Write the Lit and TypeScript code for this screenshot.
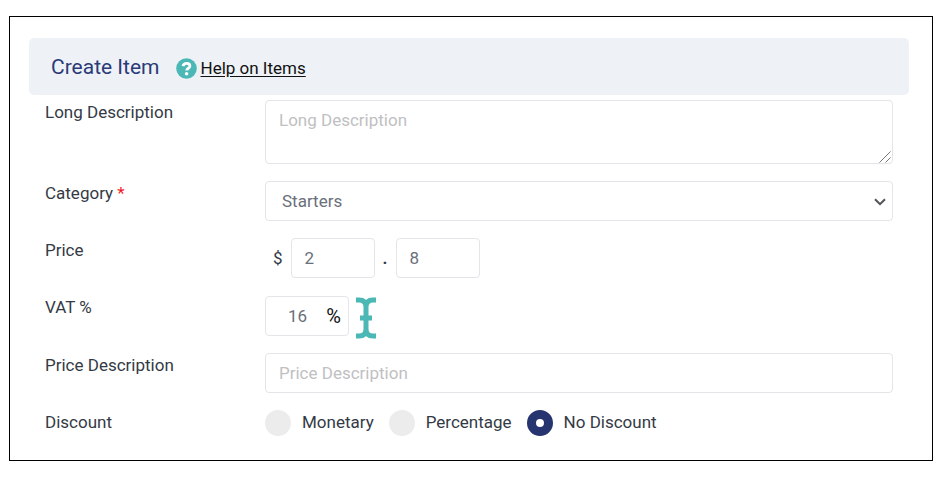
import { LitElement, html, css } from "lit";
import { customElement, state } from "lit/decorators.js";

type Discount = "monetary" | "percentage" | "none";

const DISCOUNTS: { value: Discount; label: string }[] = [
  { value: "monetary", label: "Monetary" },
  { value: "percentage", label: "Percentage" },
  { value: "none", label: "No Discount" },
];

@customElement("app-root")
export class AppRoot extends LitElement {
  @state() private discount: Discount = "none";

  static styles = css`
    :host {
      display: block;
      font-family: Roboto, "Liberation Sans", sans-serif;
      font-size: 17px;
      line-height: 24px;
      color: #343a45;
    }
    * {
      box-sizing: border-box;
    }
    .frame {
      margin: 16px 10px 16px 9px;
      padding: 21px 23px 24px 19px;
      border: 1px solid #000;
      background: #fff;
    }
    .head {
      display: flex;
      align-items: center;
      gap: 16px;
      padding: 17px 22px 15px;
      border-radius: 5px;
      background: #eef2f6;
    }
    .title {
      margin: 0;
      font-size: 21px;
      line-height: 25px;
      font-weight: 400;
      color: #2b3a78;
    }
    .help {
      display: flex;
      align-items: center;
      gap: 4px;
      padding-top: 2px;
      line-height: 21px;
      color: #111;
      text-underline-offset: 2px;
    }
    .help-icon {
      display: block;
      width: 21px;
      height: 21px;
    }
    .form {
      display: grid;
      gap: 17px;
      padding: 5px 16px 0;
    }
    .row {
      display: grid;
      grid-template-columns: 220px 1fr;
      align-items: start;
      margin: 0;
    }
    .required {
      color: #f01c24;
    }
    .control {
      display: block;
      width: 100%;
      height: 40px;
      margin: 0;
      padding: 7px 13px;
      border: 1px solid #e4e5e8;
      border-radius: 4px;
      background: #fff;
      font: inherit;
      color: #6a6f7a;
      outline: none;
    }
    .control::placeholder {
      color: #bfc0c2;
      opacity: 1;
    }
    .area-box,
    .select-box {
      position: relative;
    }
    .area {
      height: 64px;
      resize: none;
    }
    .grip {
      position: absolute;
      right: 2px;
      bottom: 1px;
      width: 12px;
      height: 12px;
      pointer-events: none;
    }
    .select {
      padding-left: 16px;
      appearance: none;
    }
    .chevron {
      position: absolute;
      right: 7px;
      top: 17px;
      width: 12px;
      height: 8px;
      pointer-events: none;
    }
    .inline {
      display: flex;
      align-items: center;
      gap: 8px;
    }
    .price {
      padding-left: 8px;
    }
    .point {
      font-weight: 700;
    }
    .amount {
      width: 84px;
    }
    .vat {
      display: flex;
      align-items: center;
      width: 84px;
      height: 40px;
      padding: 0 7px 0 22px;
      border: 1px solid #e4e5e8;
      border-radius: 4px;
    }
    .vat-input {
      flex: 1;
      min-width: 0;
      padding: 0;
      border: 0;
      background: none;
      font: inherit;
      color: #6a6f7a;
      outline: none;
    }
    .vat-sign {
      font-size: 20px;
      color: #111;
    }
    .vat-line {
      gap: 7px;
    }
    .cursor {
      width: 20px;
      height: 42px;
      margin: 2px 0 -3px;
    }
    .options {
      display: flex;
      flex-wrap: wrap;
      gap: 15px;
    }
    .option {
      display: flex;
      align-items: center;
      gap: 11px;
    }
    .radio {
      width: 26px;
      height: 26px;
      margin: 0;
      border-radius: 50%;
      background: #ececec;
      appearance: none;
    }
    .radio:checked {
      border: 9px solid #26356f;
      background: #fff;
    }
    .option-text {
      padding-bottom: 2px;
    }
  `;

  render() {
    return html`
      <main class="frame">
        <header class="head">
          <h1 class="title">Create Item</h1>
          <a class="help" href="#help">
            <svg class="help-icon" viewBox="0 0 21 21" aria-hidden="true">
              <circle cx="10.5" cy="10.5" r="10.3" fill="#4bb8b5" />
              <path
                d="M6.9 8.2C7.4 6.2 8.8 5.3 10.6 5.3c1.9 0 3.3 1 3.3 2.7 0 2.2-3.2 2.3-3.2 4.5"
                fill="none"
                stroke="#fff"
                stroke-width="2.8"
              />
              <circle cx="10.6" cy="15.8" r="1.8" fill="#fff" />
            </svg>
            Help on Items
          </a>
        </header>

        <form class="form">
          <div class="row">
            <label for="long">Long Description</label>
            <div class="area-box">
              <textarea class="control area" id="long" placeholder="Long Description"></textarea>
              <svg class="grip" viewBox="0 0 12 12" aria-hidden="true">
                <path d="M.5 11.5l11-11M6.5 11.5l5-5" stroke="#777" fill="none" />
              </svg>
            </div>
          </div>

          <div class="row">
            <label for="category">Category <span class="required">*</span></label>
            <div class="select-box">
              <select class="control select" id="category" required>
                <option>Starters</option>
              </select>
              <svg class="chevron" viewBox="0 0 12 8" aria-hidden="true">
                <path d="M1 1.3l5 4.9 5-4.9" fill="none" stroke="#505257" stroke-width="2" />
              </svg>
            </div>
          </div>

          <div class="row">
            <label for="price">Price</label>
            <div class="inline price">
              <span>$</span>
              <input class="control amount" id="price" value="2" />
              <span class="point">.</span>
              <input class="control amount" aria-label="Price, decimals" value="8" />
            </div>
          </div>

          <div class="row">
            <label for="vat">VAT %</label>
            <div class="inline vat-line">
              <div class="vat">
                <input class="vat-input" id="vat" value="16" />
                <span class="vat-sign">%</span>
              </div>
              <svg class="cursor" viewBox="0 0 20 42" aria-hidden="true">
                <path
                  d="M0 3h3q7 0 7 7v22q0 7-7 7H0M20 3h-3q-7 0-7 7v22q0 7 7 7h3M4 21h12"
                  fill="none"
                  stroke="#4bb8b5"
                  stroke-width="5"
                />
              </svg>
            </div>
          </div>

          <div class="row">
            <label for="price-description">Price Description</label>
            <input class="control" id="price-description" placeholder="Price Description" />
          </div>

          <div class="row" role="radiogroup" aria-labelledby="discount">
            <span id="discount">Discount</span>
            <div class="options">
              ${DISCOUNTS.map(
                (d) => html`
                  <label class="option">
                    <input
                      class="radio"
                      type="radio"
                      name="discount"
                      .checked=${this.discount === d.value}
                      @change=${() => (this.discount = d.value)}
                    />
                    <span class="option-text">${d.label}</span>
                  </label>
                `
              )}
            </div>
          </div>
        </form>
      </main>
    `;
  }
}
